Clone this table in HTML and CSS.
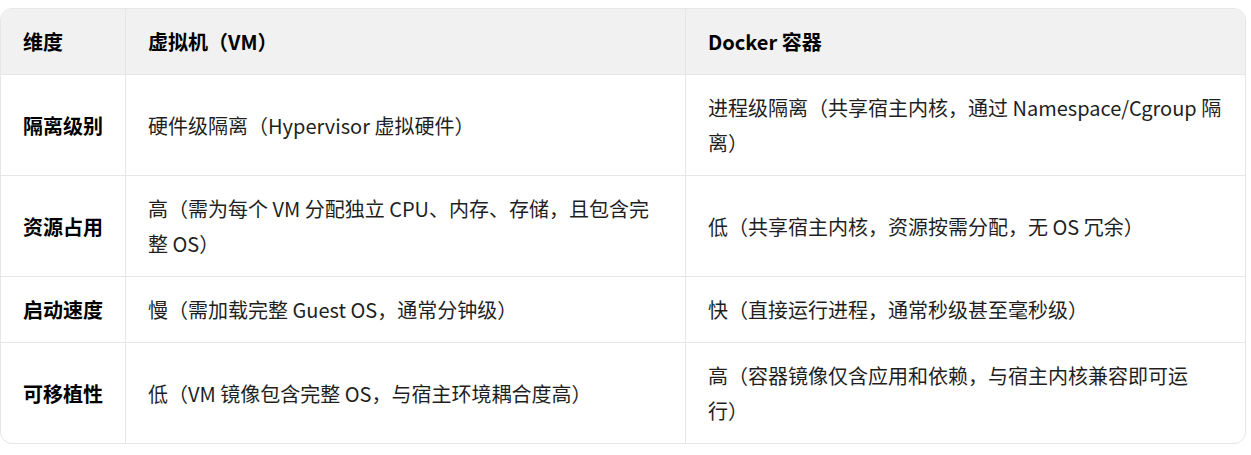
FILE: index.html
```html
<!DOCTYPE html>
<html lang="zh-CN">
<head>
<meta charset="utf-8">
<title>虚拟机与 Docker 容器对比</title>
<link rel="stylesheet" href="styles.css">
</head>
<body>
<div class="wrap">
  <table class="cmp">
    <colgroup>
      <col class="c1">
      <col class="c2">
      <col class="c3">
    </colgroup>
    <thead>
      <tr>
        <th>维度</th>
        <th>虚拟机（VM）</th>
        <th>Docker 容器</th>
      </tr>
    </thead>
    <tbody>
      <tr>
        <td class="dim">隔离级别</td>
        <td>硬件级隔离（Hypervisor 虚拟硬件）</td>
        <td>进程级隔离（共享宿主内核，通过 Namespace/Cgroup 隔离）</td>
      </tr>
      <tr>
        <td class="dim">资源占用</td>
        <td>高（需为每个 VM 分配独立 CPU、内存、存储，且包含完整 OS）</td>
        <td>低（共享宿主内核，资源按需分配，无 OS 冗余）</td>
      </tr>
      <tr>
        <td class="dim">启动速度</td>
        <td>慢（需加载完整 Guest OS，通常分钟级）</td>
        <td>快（直接运行进程，通常秒级甚至毫秒级）</td>
      </tr>
      <tr>
        <td class="dim">可移植性</td>
        <td>低（VM 镜像包含完整 OS，与宿主环境耦合度高）</td>
        <td>高（容器镜像仅含应用和依赖，与宿主内核兼容即可运行）</td>
      </tr>
    </tbody>
  </table>
</div>
</body>
</html>
```
FILE: styles.css
```css
html, body {
  margin: 0;
  padding: 0;
  background: #ffffff;
}

body {
  font-family: "Noto Sans CJK SC", "Noto Sans", sans-serif;
  font-size: 20px;
  color: #1f1f1f;
  text-spacing-trim: space-all;
}

.wrap {
  padding-top: 8px;
  width: 1246px;
}

.cmp {
  width: 1246px;
  table-layout: fixed;
  border-collapse: separate;
  border-spacing: 0;
  border: 1px solid #e6e6e6;
  border-radius: 12px;
  overflow: hidden;
}

.c1 { width: 124px; }
.c2 { width: 560px; }
.c3 { width: 560px; }

.cmp th,
.cmp td {
  padding: 15px 22px;
  line-height: 35px;
  text-align: left;
  vertical-align: middle;
  border-bottom: 1px solid #e6e6e6;
}

.cmp th + th,
.cmp td + td {
  border-left: 1px solid #e6e6e6;
}

.cmp tbody tr:last-child td {
  border-bottom: none;
}

.cmp thead th {
  background: #f1f1f1;
  font-weight: 700;
  color: #000000;
}

.cmp td.dim {
  font-weight: 700;
  color: #000000;
}
```
